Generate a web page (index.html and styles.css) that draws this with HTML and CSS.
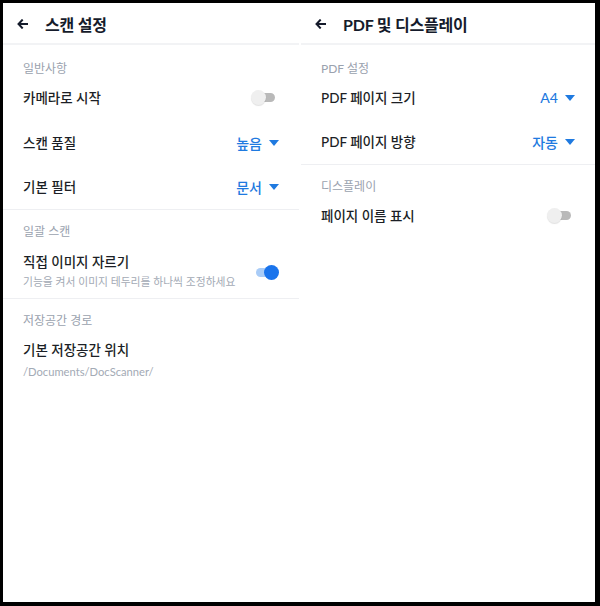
FILE: index.html
```html
<!DOCTYPE html>
<html lang="ko">
<head>
    <meta charset="UTF-8">
    <meta name="viewport" content="width=device-width, initial-scale=1.0">
    <title>스캔 설정</title>
    <link rel="stylesheet" href="styles.css">
</head>
<body>
    <div class="frame">
        <!-- 왼쪽 화면: 스캔 설정 -->
        <section class="panel panel-left">
            <header class="bar">
                <svg class="back" viewBox="0 0 11 10" width="11" height="10">
                    <path d="M10.2 5H2M5 1.3L1.5 5 5 8.7" fill="none" stroke="#151b2b" stroke-width="2" stroke-linecap="square"/>
                </svg>
                <h1>스캔 설정</h1>
            </header>

            <div class="group first">
                <div class="group-title">일반사항</div>
                <div class="row">
                    <span class="label">카메라로 시작</span>
                    <span class="switch"></span>
                </div>
                <div class="row">
                    <span class="label">스캔 품질</span>
                    <span class="value">높음<i class="caret"></i></span>
                </div>
                <div class="row">
                    <span class="label">기본 필터</span>
                    <span class="value">문서<i class="caret"></i></span>
                </div>
            </div>

            <div class="group">
                <div class="group-title">일괄 스캔</div>
                <div class="row row-tall">
                    <div class="text">
                        <div class="label">직접 이미지 자르기</div>
                        <div class="hint">기능을 켜서 이미지 테두리를 하나씩 조정하세요</div>
                    </div>
                    <span class="switch on"></span>
                </div>
            </div>

            <div class="group last">
                <div class="group-title">저장공간 경로</div>
                <div class="row row-path">
                    <div class="text">
                        <div class="label">기본 저장공간 위치</div>
                        <div class="path">/Documents/DocScanner/</div>
                    </div>
                </div>
            </div>
        </section>

        <!-- 오른쪽 화면: PDF 및 디스플레이 -->
        <section class="panel panel-right">
            <header class="bar">
                <svg class="back" viewBox="0 0 11 10" width="11" height="10">
                    <path d="M10.2 5H2M5 1.3L1.5 5 5 8.7" fill="none" stroke="#151b2b" stroke-width="2" stroke-linecap="square"/>
                </svg>
                <h1>PDF 및 디스플레이</h1>
            </header>

            <div class="group first">
                <div class="group-title">PDF 설정</div>
                <div class="row">
                    <span class="label">PDF 페이지 크기</span>
                    <span class="value">A4<i class="caret"></i></span>
                </div>
                <div class="row">
                    <span class="label">PDF 페이지 방향</span>
                    <span class="value">자동<i class="caret"></i></span>
                </div>
            </div>

            <div class="group last">
                <div class="group-title">디스플레이</div>
                <div class="row">
                    <span class="label">페이지 이름 표시</span>
                    <span class="switch"></span>
                </div>
            </div>
        </section>
    </div>
</body>
</html>
```

FILE: styles.css
```css
* {
    box-sizing: border-box;
}

html, body {
    margin: 0;
    padding: 0;
}

body {
    background: #000;
    padding: 3px 5px 4px 3px;
    height: 606px;
    font-family: 'Lato', 'Noto Sans CJK KR', sans-serif;
    color: #1c1f26;
}

.frame {
    display: flex;
    gap: 2px;
    height: 100%;
    background: #fff;
}

.panel {
    display: flex;
    flex-direction: column;
}

.panel-left {
    width: 296px;
}

.panel-right {
    flex: 1;
}

/* top bar */
.bar {
    display: flex;
    align-items: center;
    height: 42px;
    padding: 2px 0 0 14px;
    border-bottom: 2px solid #f2f3f5;
}

.back {
    display: block;
    margin-right: 17px;
}

.bar h1 {
    margin: 0;
    font-size: 16px;
    font-weight: 700;
    color: #151b2b;
    letter-spacing: -0.2px;
}

/* groups */
.group {
    border-bottom: 1px solid #eeeff2;
}

.group.last {
    border-bottom: none;
}

.group-title {
    padding: 16px 20px 0;
    line-height: 12px;
    font-size: 12px;
    color: #9aa2ae;
}

.group.first .group-title {
    padding-top: 18px;
}

.row {
    display: flex;
    align-items: center;
    justify-content: space-between;
    height: 45px;
    padding: 0 20px;
}

.group.first .row:last-child {
    height: 44px;
}

.row-tall {
    height: 60px;
    padding-top: 8px;
}

.row-path {
    height: auto;
    padding-top: 15px;
}

.label {
    font-size: 13.5px;
    font-weight: 500;
    line-height: 16px;
    color: #1c1f26;
}

.hint {
    margin-top: 4px;
    font-size: 10.8px;
    line-height: 16px;
    color: #a3aab5;
}

.path {
    margin-top: 7px;
    font-size: 11.2px;
    line-height: 14px;
    color: #a3aab5;
}

.value {
    display: flex;
    align-items: center;
    font-size: 14px;
    font-weight: 500;
    color: #1f7ae0;
}

.caret {
    width: 0;
    height: 0;
    margin-left: 7px;
    border-left: 5px solid transparent;
    border-right: 5px solid transparent;
    border-top: 6px solid #1f7ae0;
}

/* toggle switch */
.switch {
    position: relative;
    width: 25px;
    height: 15px;
    margin-right: 3px;
}

.switch::before {
    content: '';
    position: absolute;
    left: 2px;
    right: 1px;
    top: 3px;
    bottom: 3px;
    border-radius: 5px;
    background: #b9b9b9;
}

.switch::after {
    content: '';
    position: absolute;
    left: 0;
    top: 0;
    width: 15px;
    height: 15px;
    border-radius: 50%;
    background: #efefef;
    box-shadow: 0 1px 1px rgba(0, 0, 0, 0.12);
}

.switch.on {
    margin-right: 0;
}

.switch.on::before {
    background: #a9ccf7;
}

.switch.on::after {
    left: auto;
    right: 0;
    background: #1a74ec;
    box-shadow: none;
}
```
